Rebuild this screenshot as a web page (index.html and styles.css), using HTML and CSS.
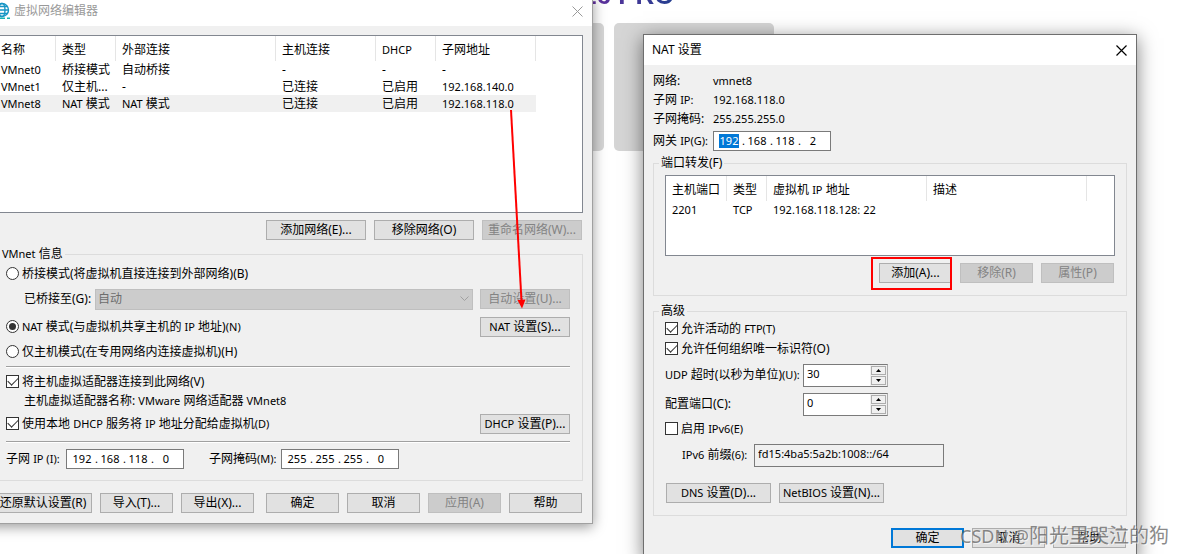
FILE: index.html
```html
<!DOCTYPE html>
<html lang="zh-CN">
<head>
<meta charset="utf-8">
<title>虚拟网络编辑器</title>
<link rel="stylesheet" href="styles.css">
</head>
<body>
<main class="desktop">
  <div class="backdrop" aria-hidden="true">
    <div class="product">16 PRO</div>
    <div class="tile tile-a"></div>
    <div class="tile tile-b"></div>
  </div>

  <section class="window editor">
    <header class="titlebar">
      <svg class="app-icon" width="18" height="18" viewBox="0 0 18 18" fill="none" stroke="#1795c4" stroke-width="1.4">
        <circle cx="9" cy="8" r="6.5"/><ellipse cx="9" cy="8" rx="3" ry="6.5"/>
        <path d="M2.5 8h13M3.5 4.5h11M3.5 11.500h11"/>
        <path d="M1 16.300h11M14 16.300h3" stroke="#19b3b3" stroke-width="1.500"/>
      </svg>
      <h1 class="title muted">虚拟网络编辑器</h1>
      <button class="close muted" aria-label="关闭">
        <svg width="11" height="11" viewBox="0 0 11 11" stroke="currentColor" fill="none"><path d="M.5.5l10 10M10.500.5l-10 10"/></svg>
      </button>
    </header>
    <div class="body">
      <div class="list networks">
        <table>
          <colgroup><col class="w61"><col class="w60"><col class="w160"><col class="w100"><col class="w60"><col class="w100"></colgroup>
          <thead><tr><th>名称</th><th>类型</th><th>外部连接</th><th>主机连接</th><th><span class="en">DHCP</span></th><th>子网地址</th></tr></thead>
          <tbody>
            <tr><td class="en">VMnet0</td><td>桥接模式</td><td>自动桥接</td><td>-</td><td>-</td><td>-</td></tr>
            <tr><td class="en">VMnet1</td><td>仅主机...</td><td>-</td><td>已连接</td><td>已启用</td><td class="en">192.168.140.0</td></tr>
            <tr class="selected"><td class="en">VMnet8</td><td><span class="en">NAT</span> 模式</td><td><span class="en">NAT</span> 模式</td><td>已连接</td><td>已启用</td><td class="en">192.168.118.0</td></tr>
          </tbody>
        </table>
      </div>
      <div class="buttons network-actions">
        <button class="btn wide">添加网络(E)...</button>
        <button class="btn wide">移除网络(O)</button>
        <button class="btn wide" disabled>重命名网络(W)...</button>
      </div>
      <fieldset class="group info">
        <legend><span class="en">VMnet</span> 信息</legend>
        <div class="row">
          <label class="choice"><input type="radio" name="mode">桥接模式(将虚拟机直接连接到外部网络)(B)</label>
        </div>
        <div class="row bridge">
          <label for="bridge-to">已桥接至(G):</label>
          <div class="combo">
            <select id="bridge-to" disabled><option>自动</option></select>
            <svg width="9" height="6" viewBox="0 0 9 6" fill="none" stroke="#a0a0a0"><path d="M.5.5l4 4 4-4"/></svg>
          </div>
          <button class="btn medium" disabled>自动设置(U)...</button>
        </div>
        <div class="row nat">
          <label class="choice"><input type="radio" name="mode" checked><span><span class="en">NAT</span> 模式(与虚拟机共享主机的 <span class="en">IP</span> 地址)<span class="en">(N)</span></span></label>
          <button class="btn medium"><span class="en">NAT</span> 设置(S)...</button>
        </div>
        <div class="row host-only">
          <label class="choice"><input type="radio" name="mode">仅主机模式(在专用网络内连接虚拟机)(H)</label>
        </div>
        <hr class="rule mode-rule">
        <div class="row adapter">
          <label class="choice"><input type="checkbox" checked>将主机虚拟适配器连接到此网络(V)</label>
        </div>
        <p class="adapter-name">主机虚拟适配器名称: <span class="en">VMware</span> 网络适配器 <span class="en">VMnet8</span></p>
        <div class="row dhcp">
          <label class="choice"><input type="checkbox" checked><span>使用本地 <span class="en">DHCP</span> 服务将 <span class="en">IP</span> 地址分配给虚拟机<span class="en">(D)</span></span></label>
          <button class="btn medium"><span class="en">DHCP</span> 设置(P)...</button>
        </div>
        <hr class="rule dhcp-rule">
        <div class="row subnet">
          <label for="subnet-1">子网 <span class="en">IP (I):</span></label>
          <div class="ip">
            <input id="subnet-1" value="192"><i>.</i><input aria-label="子网 IP 2" value="168"><i>.</i><input aria-label="子网 IP 3" value="118"><i>.</i><input aria-label="子网 IP 4" value="0">
          </div>
          <label class="mask-label" for="mask-1">子网掩码<span class="en">(M):</span></label>
          <div class="ip">
            <input id="mask-1" value="255"><i>.</i><input aria-label="子网掩码 2" value="255"><i>.</i><input aria-label="子网掩码 3" value="255"><i>.</i><input aria-label="子网掩码 4" value="0">
          </div>
        </div>
      </fieldset>
      <footer class="buttons editor-footer">
        <button class="btn grow">还原默认设置(R)</button>
        <button class="btn">导入(T)...</button>
        <button class="btn">导出(X)...</button>
        <button class="btn confirm">确定</button>
        <button class="btn">取消</button>
        <button class="btn" disabled>应用(A)</button>
        <button class="btn">帮助</button>
      </footer>
    </div>
  </section>

  <section class="window nat-window">
    <header class="titlebar">
      <h2 class="title">NAT 设置</h2>
      <button class="close" aria-label="关闭">
        <svg width="11" height="11" viewBox="0 0 11 11" stroke="currentColor" stroke-width="1.200" fill="none"><path d="M.5.5l10 10M10.500.5l-10 10"/></svg>
      </button>
    </header>
    <div class="body">
      <dl class="facts">
        <dt>网络:</dt><dd class="en">vmnet8</dd>
        <dt>子网 <span class="en">IP:</span></dt><dd class="en">192.168.118.0</dd>
        <dt>子网掩码:</dt><dd class="en">255.255.255.0</dd>
      </dl>
      <div class="row gateway">
        <label for="gateway-1">网关 <span class="en">IP(G):</span></label>
        <div class="ip">
          <input id="gateway-1" class="picked" value="192"><i>.</i><input aria-label="网关 IP 2" value="168"><i>.</i><input aria-label="网关 IP 3" value="118"><i>.</i><input aria-label="网关 IP 4" value="2">
        </div>
      </div>
      <fieldset class="group forwarding">
        <legend>端口转发(F)</legend>
        <div class="list ports">
          <table>
            <colgroup><col class="w61"><col class="w40"><col class="w160"><col class="w160"></colgroup>
            <thead><tr><th>主机端口</th><th>类型</th><th>虚拟机 <span class="en">IP</span> 地址</th><th>描述</th></tr></thead>
            <tbody><tr><td class="en">2201</td><td class="en">TCP</td><td class="en">192.168.118.128: 22</td><td></td></tr></tbody>
          </table>
        </div>
        <div class="buttons port-actions">
          <span class="marked"><button class="btn">添加(A)...</button></span>
          <button class="btn" disabled>移除(R)</button>
          <button class="btn" disabled>属性(P)</button>
        </div>
      </fieldset>
      <fieldset class="group advanced">
        <legend>高级</legend>
        <div class="row"><label class="choice"><input type="checkbox" checked><span>允许活动的 <span class="en">FTP(T)</span></span></label></div>
        <div class="row"><label class="choice"><input type="checkbox" checked>允许任何组织唯一标识符(O)</label></div>
        <div class="row setting">
          <label for="udp"><span class="en">UDP</span> 超时(以秒为单位)<span class="en">(U):</span></label>
          <div class="spin">
            <input id="udp" value="30">
            <div class="steps">
              <button aria-label="增加"><svg width="5" height="3"><path d="M0 3L2.500 0L5 3z"/></svg></button>
              <button aria-label="减少"><svg width="5" height="3"><path d="M0 0L2.500 3L5 0z"/></svg></button>
            </div>
          </div>
        </div>
        <div class="row setting config-port">
          <label for="port">配置端口(C):</label>
          <div class="spin">
            <input id="port" value="0">
            <div class="steps">
              <button aria-label="增加"><svg width="5" height="3"><path d="M0 3L2.500 0L5 3z"/></svg></button>
              <button aria-label="减少"><svg width="5" height="3"><path d="M0 0L2.500 3L5 0z"/></svg></button>
            </div>
          </div>
        </div>
        <div class="row ipv6"><label class="choice"><input type="checkbox"><span>启用 <span class="en">IPv6(E)</span></span></label></div>
        <div class="row prefix">
          <label for="prefix"><span class="en">IPv6</span> 前缀<span class="en">(6):</span></label>
          <input id="prefix" class="field" value="fd15:4ba5:5a2b:1008::/64" readonly>
        </div>
        <div class="buttons service-actions">
          <button class="btn service"><span class="en">DNS</span> 设置(D)...</button>
          <button class="btn service"><span class="en">NetBIOS</span> 设置(N)...</button>
        </div>
      </fieldset>
      <footer class="buttons nat-footer">
        <button class="btn primary">确定</button>
        <button class="btn">取消</button>
        <button class="btn">帮助</button>
      </footer>
    </div>
  </section>

  <svg class="pointer" width="20" height="202" viewBox="0 0 20 202" aria-hidden="true">
    <path d="M4 2L14.500 193" stroke="#f00" stroke-width="2" fill="none"/>
    <path d="M10.500 192l8-.5-3.500 9z" fill="#f00"/>
  </svg>
  <div class="watermark"><span class="handle">CSDN @</span>阳光里哭泣的狗</div>
</main>
</body>
</html>
```
FILE: styles.css
```css
* { box-sizing: border-box; }

body {
  margin: 0;
  font: 12px/16px "Noto Sans", "Noto Sans CJK SC", sans-serif;
  color: #000;
  background: #fff;
}

button, input, select {
  margin: 0;
  font: inherit;
  color: inherit;
}

.desktop {
  position: relative;
  height: 100vh;
  overflow: hidden;
}

.en { font-size: 11px; }

/* Page behind the windows */
.product {
  position: absolute;
  left: 582px;
  top: -21px;
  font: bold 26px/32px "Liberation Sans", sans-serif;
  background: linear-gradient(90deg, #6b2fa0, #223f8f);
  background-clip: text;
  color: transparent;
}

.tile {
  position: absolute;
  top: 23px;
  width: 160px;
  height: 128px;
  border-radius: 5px;
  background: #d5d5d5;
}
.tile-a { left: 444px; }
.tile-b { left: 614px; }

/* Windows */
.window {
  position: absolute;
  background: #f0f0f0;
  border: 1px solid #a0a0a0;
}
.editor {
  left: -16px;
  top: -5px;
  width: 609px;
  box-shadow: 0 3px 12px rgba(0, 0, 0, .4);
}
.nat-window {
  left: 643px;
  top: 34px;
  width: 494px;
  border-color: #6e6e6e;
  box-shadow: 0 4px 18px rgba(0, 0, 0, .5);
}

.titlebar {
  display: flex;
  align-items: center;
  height: 30px;
  padding: 0 9px 0 8px;
  background: #fff;
}
.title {
  flex: 1;
  margin: 0;
  font-size: 12px;
  font-weight: normal;
}
.muted { color: #999; }
.app-icon { margin-right: 3px; }
.close {
  display: flex;
  padding: 0;
  border: 0;
  background: none;
}
.body { padding: 9px 9px 10px; }

/* Lists */
.list {
  background: #fff;
  border: 1px solid #828790;
}
.networks { height: 178px; }
.ports { height: 81px; }
table {
  table-layout: fixed;
  width: 0;
  border-collapse: separate;
  border-spacing: 0;
}
.w40 { width: 40px; }
.w60 { width: 60px; }
.w61 { width: 61px; }
.w100 { width: 100px; }
.w160 { width: 160px; }
th, td {
  padding: 0 0 0 6px;
  text-align: left;
  font-weight: normal;
  white-space: nowrap;
}
th {
  height: 25px;
  padding-top: 2px;
  border-right: 1px solid #e5e5e5;
}
td { height: 17px; }
.selected { background: #f0f0f0; }

/* Buttons */
.buttons {
  display: flex;
  justify-content: flex-end;
  gap: 8px;
}
.btn {
  width: 73px;
  height: 20px;
  padding: 0;
  border: 1px solid #adadad;
  background: #e1e1e1;
  line-height: 16px;
  white-space: nowrap;
}
.btn:disabled {
  color: #838383;
  background: #ccc;
  border-color: #bfbfbf;
}
.wide { width: 100px; }
.medium { width: 90px; }
.service { width: 105px; }
.grow { flex: 1; }
.btn.primary { border: 2px solid #0078d7; }
.network-actions { padding: 7px 1px 6px 0; }
.editor-footer { padding: 12px 1px 0 0; }
.confirm { margin-left: 4px; }

/* Group boxes */
.group {
  min-width: 0;
  margin: 0;
  padding: 0 11px;
  border: 1px solid #dcdcdc;
}
legend {
  margin-left: -6px;
  padding: 0 2px;
}
.info { padding: 2px 12px 11px 11px; }
.forwarding { padding-top: 4px; padding-bottom: 12px; }
.advanced { margin-top: 7px; padding-bottom: 12px; }

.row {
  display: flex;
  align-items: center;
  height: 20px;
}
.choice {
  display: flex;
  align-items: center;
  gap: 3px;
  flex: 1;
}
.bridge { margin-top: 5px; padding-left: 18px; gap: 7px; }
.bridge label { width: 64px; white-space: nowrap; }
.nat { margin-top: 8px; }
.host-only { margin-top: 5px; }
.mode-rule { margin: 4px 0; }
.adapter-name { margin: 0; padding-left: 18px; line-height: 18px; }
.dhcp { margin-top: 4px; }
.dhcp-rule { margin: 7px 0 6px; }
.rule {
  height: 2px;
  border: 0;
  border-top: 1px solid #a0a0a0;
  background: #fff;
}

/* Radios and tick boxes */
input[type="radio"], input[type="checkbox"] {
  appearance: none;
  flex: none;
  display: grid;
  place-items: center;
  width: 13px;
  height: 13px;
  margin-bottom: 2px;
  border: 1px solid #333;
  background: #fff;
}
input[type="radio"] { border-radius: 50%; }
input[type="radio"]:checked::before {
  content: "";
  width: 7px;
  height: 7px;
  border-radius: 50%;
  background: #333;
}
input[type="checkbox"]:checked::before {
  content: "";
  width: 9px;
  height: 5px;
  border: solid #333;
  border-width: 0 0 1px 1px;
  transform: translateY(-1px) rotate(-45deg);
}

/* Drop-down */
.combo {
  flex: 1;
  display: grid;
  align-items: center;
}
.combo > * { grid-area: 1 / 1; }
.combo svg { justify-self: end; margin-right: 4px; }
select {
  appearance: none;
  width: 100%;
  height: 21px;
  padding: 0 2px;
  border: 1px solid #bfbfbf;
  border-radius: 0;
  background: #ccc;
}
select:disabled { color: #6d6d6d; opacity: 1; }

/* IP address box */
.ip {
  display: flex;
  width: 118px;
  height: 20px;
  padding: 0 5px 0 3px;
  border: 1px solid #7a7a7a;
  background: #fff;
  font-size: 11px;
  line-height: 18px;
}
.ip input {
  width: 24px;
  padding: 0 2px;
  border: 0;
  background: none;
  text-align: center;
}
.ip i { width: 4px; font-style: normal; text-align: right; }
.ip .picked {
  margin: 2px 0;
  color: #fff;
  background: #0078d7 content-box;
}
.subnet label { width: 60px; }
.subnet .mask-label { width: 72px; margin-left: 25px; }

/* NAT settings */
.nat-window .body { padding-top: 6px; }
.facts {
  display: grid;
  grid-template-columns: 60px 1fr;
  margin: 0;
  line-height: 19px;
}
.facts dd { margin: 0; }
.gateway { margin: 3px 0 4px; }
.gateway label { width: 60px; }
.port-actions { padding: 7px 1px 0 0; }
.marked { position: relative; display: flex; }
.marked::after {
  content: "";
  position: absolute;
  inset: -6px 0 -7px -8px;
  border: 2px solid #f00;
}
.setting { height: 24px; margin-top: 4px; }
.setting label { width: 138px; }
.config-port { margin-top: 5px; }
.ipv6 { margin-top: 3px; }
.spin {
  display: flex;
  width: 85px;
  height: 23px;
  border: 1px solid #7a7a7a;
  border-right-color: #adadad;
  background: #fff;
}
.spin input {
  flex: 1;
  min-width: 0;
  padding: 0 3px 2px;
  border: 0;
  background: none;
  font-size: 11px;
}
.steps {
  display: flex;
  flex-direction: column;
  gap: 1px;
  width: 17px;
  padding: 1px;
  background: #f0f0f0;
}
.steps button {
  flex: 1;
  display: grid;
  place-items: center;
  padding: 0;
  border: 1px solid #adadad;
  background: #f0f0f0;
}
.prefix { height: 24px; margin-top: 4px; padding-left: 17px; }
.prefix label { width: 72px; }
.field {
  width: 190px;
  height: 23px;
  padding: 0 3px 3px;
  border: 1px solid #7a7a7a;
  background: #f0f0f0;
  font-size: 11px;
}
.service-actions { justify-content: flex-start; padding: 16px 0 0 1px; }
.nat-footer { padding: 12px 1px 0 0; }

/* Overlays */
.pointer {
  position: absolute;
  left: 507px;
  top: 108px;
}
.watermark {
  position: absolute;
  right: 15px;
  bottom: 5px;
  font-size: 20px;
  line-height: 26px;
  color: rgba(100, 100, 100, .75);
  text-shadow: 1px 1px 0 rgba(255, 255, 255, .6);
}
.handle { font-size: 18px; }
```
